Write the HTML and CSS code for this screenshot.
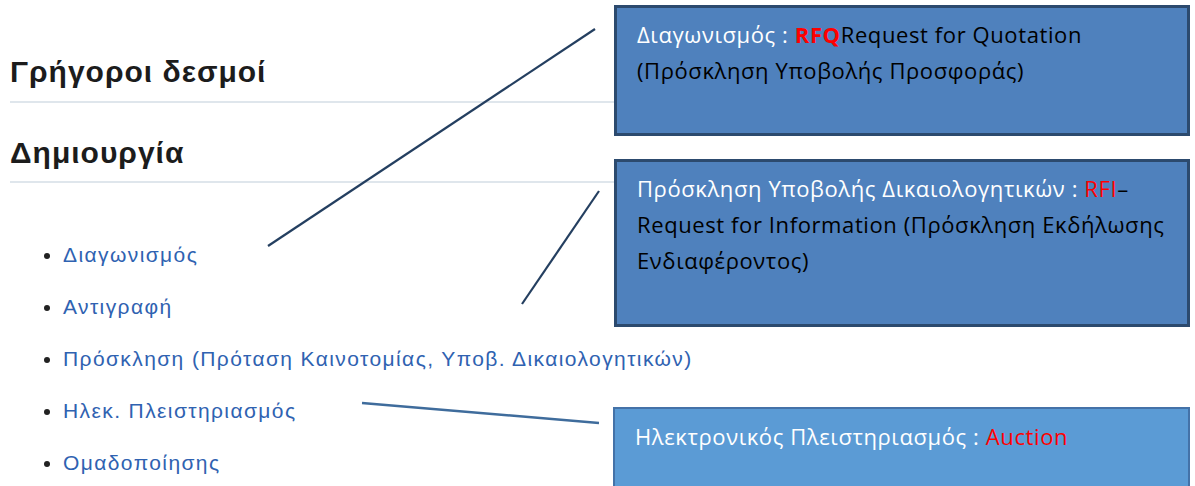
FILE: index.html
```html
<!DOCTYPE html>
<html lang="el">
<head>
    <meta charset="UTF-8">
    <title>Δημιουργία</title>
    <link rel="stylesheet" href="styles.css">
</head>
<body>

<div class="page">
    <div class="menu">
        <h2 class="menu-title first">Γρήγοροι δεσμοί</h2>
        <h2 class="menu-title">Δημιουργία</h2>
        <ul class="links">
            <li><a href="#">Διαγωνισμός</a></li>
            <li><a href="#">Αντιγραφή</a></li>
            <li><a href="#">Πρόσκληση (Πρόταση Καινοτομίας, Υποβ. Δικαιολογητικών)</a></li>
            <li><a href="#">Ηλεκ. Πλειστηριασμός</a></li>
            <li><a href="#">Ομαδοποίησης</a></li>
        </ul>
    </div>

    <div class="notes">
        <div class="note note-rfq">
            <span class="w">Διαγωνισμός : </span><b class="red">RFQ</b>Request for Quotation<br>
            (Πρόσκληση Υποβολής Προσφοράς)
        </div>
        <div class="note note-rfi">
            <span class="w">Πρόσκληση Υποβολής Δικαιολογητικών : </span><span class="red">RFI</span>–<br>
            Request for Information (Πρόσκληση Εκδήλωσης<br>
            Ενδιαφέροντος)
        </div>
        <div class="note note-auction">
            <span class="w">Ηλεκτρονικός Πλειστηριασμός : </span><span class="red">Auction</span>
        </div>
    </div>

    <!-- γραμμές σύνδεσης -->
    <svg class="connectors" width="1195" height="486" viewBox="0 0 1195 486">
        <line x1="268" y1="246" x2="595" y2="29" stroke="#243f60" stroke-width="2.2"/>
        <line x1="522" y1="304" x2="599" y2="191" stroke="#243f60" stroke-width="2.2"/>
        <line x1="362" y1="403" x2="599" y2="423" stroke="#3f6c9c" stroke-width="2.4"/>
    </svg>
</div>

</body>
</html>
```

FILE: styles.css
```css
body {
    margin: 0;
    background-color: #fff;
    overflow: hidden;
}

.page {
    position: relative;
    display: flex;
    height: 486px;
}

.menu {
    width: 604px;
    flex-shrink: 0;
    padding-left: 10px;
    font-family: "Liberation Sans", Arial, sans-serif;
}

.menu-title {
    margin: 34px 0 0 0;
    font-size: 30px;
    line-height: 32px;
    letter-spacing: 1px;
    font-weight: bold;
    color: #1c1c1c;
    padding-bottom: 12px;
    border-bottom: 2px solid #dfe6ec;
}

.menu-title.first {
    margin-top: 56px;
    padding-bottom: 13px;
}

.links {
    margin: 46px 0 0 0;
    padding-left: 53px;
    font-size: 21px;
    line-height: 52px;
    letter-spacing: 1.4px;
    white-space: nowrap;
}

.links li::marker {
    color: #222;
    font-size: 20px;
}

.links a {
    color: #2f62b1;
    text-decoration: none;
}

.notes {
    width: 576px;
    flex-shrink: 0;
    padding-top: 5px;
    display: flex;
    flex-direction: column;
    font-family: "Open Sans", "Noto Sans", sans-serif;
    font-size: 22px;
    line-height: 36px;
    letter-spacing: 0.6px;
    color: #000;
}

.note {
    flex-shrink: 0;
    box-sizing: border-box;
    background-color: #4f81bd;
    border: 3px solid #2c4a6e;
    padding: 8px 10px 0 20px;
}

.note-rfq {
    height: 131px;
}

.note-rfi {
    margin-top: 23px;
    height: 168px;
}

.note-auction {
    margin-top: 80px;
    margin-left: -1px;
    height: 90px;
    background-color: #5b9bd5;
    border: 2px solid #4472a8;
    padding-top: 9px;
}

.w {
    color: #fff;
}

.red {
    color: #f00;
}

.connectors {
    position: absolute;
    left: 0;
    top: 0;
    pointer-events: none;
}
```
